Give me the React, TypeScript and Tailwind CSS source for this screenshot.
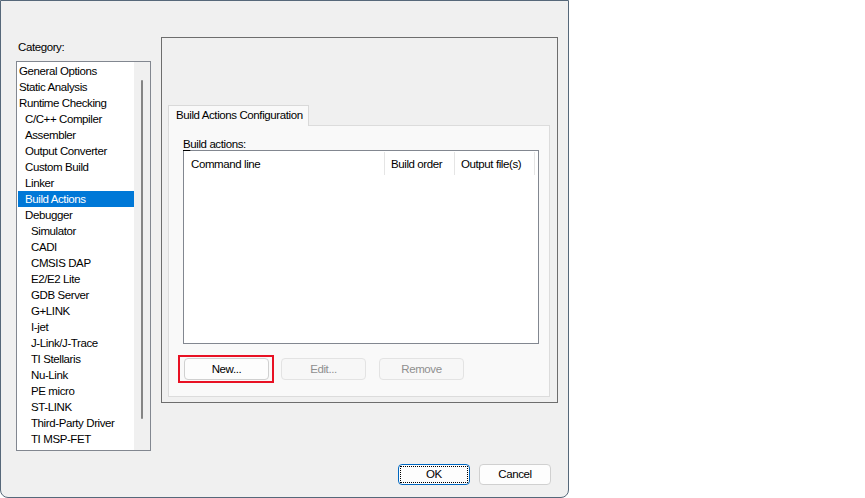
import React from 'react';

type Item = { label: string; level: number };

const items: Item[] = [
  { label: 'General Options', level: 0 },
  { label: 'Static Analysis', level: 0 },
  { label: 'Runtime Checking', level: 0 },
  { label: 'C/C++ Compiler', level: 1 },
  { label: 'Assembler', level: 1 },
  { label: 'Output Converter', level: 1 },
  { label: 'Custom Build', level: 1 },
  { label: 'Linker', level: 1 },
  { label: 'Build Actions', level: 1 },
  { label: 'Debugger', level: 1 },
  { label: 'Simulator', level: 2 },
  { label: 'CADI', level: 2 },
  { label: 'CMSIS DAP', level: 2 },
  { label: 'E2/E2 Lite', level: 2 },
  { label: 'GDB Server', level: 2 },
  { label: 'G+LINK', level: 2 },
  { label: 'I-jet', level: 2 },
  { label: 'J-Link/J-Trace', level: 2 },
  { label: 'TI Stellaris', level: 2 },
  { label: 'Nu-Link', level: 2 },
  { label: 'PE micro', level: 2 },
  { label: 'ST-LINK', level: 2 },
  { label: 'Third-Party Driver', level: 2 },
  { label: 'TI MSP-FET', level: 2 },
];

const indent = ['pl-[1px]', 'pl-[7px]', 'pl-[13px]'];

const App: React.FC = () => {
  const selected = 'Build Actions';

  return (
    <div className="w-[865px] h-[498px] bg-white font-['Liberation_Sans',Arial,sans-serif] text-[11.5px] tracking-[-0.4px] text-black">
      <div className="w-[569px] h-[498px] bg-[#f0f0f0] border border-[#56687a] rounded-b-[8px] flex flex-col">
        <div className="flex pt-[36px]">
          {/* category column */}
          <div className="ml-[15px] w-[135px] flex flex-col">
            <div className="mt-[2px] leading-[16px] pl-[2px]">Category:</div>
            <div className="mt-[6px] h-[390px] border border-[#828790] bg-white flex">
              <div className="flex-1 pt-[1px]">
                {items.map((it) => (
                  <div
                    key={it.label}
                    className={`ml-[1px] h-[16px] leading-[16px] whitespace-nowrap ${indent[it.level]} ${
                      it.label === selected ? 'bg-[#0078d7] text-white' : ''
                    }`}
                  >
                    {it.label}
                  </div>
                ))}
              </div>
              <div className="w-[16px] bg-[#f0f0f0] flex justify-center pt-[18px] pb-[31px]">
                <div className="w-[2px] h-full bg-[#858585] rounded-full" />
              </div>
            </div>
          </div>

          {/* group box */}
          <div className="ml-[10px] w-[397px] h-[366px] border border-[#6d6d6d] flex flex-col pt-[67px] pl-[6px] pr-[7px] pb-[5px]">
            <div className="relative z-10 -mb-px w-[141px] h-[21px] border border-b-0 border-[#d9d9d9] bg-[#f9f9f9] pl-[7px] leading-[19px] whitespace-nowrap">
              Build Actions Configuration
            </div>
            <div className="flex-1 border border-[#dcdcdc] bg-[#f9f9f9] pt-[12px] pl-[14px]">
              <div className="h-[12px] leading-[13px] whitespace-nowrap">
                <span className="underline underline-offset-[2px]">B</span>uild actions:
              </div>
              <div className="w-[356px] h-[194px] border border-[#828790] bg-white">
                <div className="flex h-[25px] items-stretch whitespace-nowrap">
                  <div className="w-[201px] border-r border-[#e5e5e5] my-[1px] pl-[7px] pt-[2px] flex items-center">Command line</div>
                  <div className="w-[70px] border-r border-[#e5e5e5] my-[1px] pl-[6px] pt-[2px] flex items-center">Build order</div>
                  <div className="w-[80px] border-r border-[#e5e5e5] my-[1px] pl-[6px] pt-[2px] flex items-center">Output file(s)</div>
                </div>
              </div>
              <div className="flex mt-[14px] pl-[1px]">
                <div className="relative">
                  <button className="w-[85px] h-[22px] rounded-[4px] border border-[#d0d0d0] bg-[#fdfdfd] pt-[1px]">New...</button>
                  <div className="absolute -left-[6px] -right-[5px] -top-[3px] -bottom-[3px] border-2 border-[#e81123] pointer-events-none" />
                </div>
                <button className="ml-[12px] w-[85px] h-[22px] rounded-[4px] border border-[#e3e3e3] bg-[#f7f7f7] text-[#8f8f8f] pt-[1px]">Edit...</button>
                <button className="ml-[13px] w-[85px] h-[22px] rounded-[4px] border border-[#e3e3e3] bg-[#f7f7f7] text-[#8f8f8f] pt-[1px]">Remove</button>
              </div>
            </div>
          </div>
        </div>

        <div className="mt-auto flex justify-end gap-[9px] pr-[17px] pb-[12px]">
          <button className="w-[72px] h-[21px] rounded-[4px] border border-[#0067c0] bg-[#fdfdfd] p-[1px]">
            <div className="w-full h-full border border-dotted border-black flex items-center justify-center">OK</div>
          </button>
          <button className="w-[72px] h-[21px] rounded-[4px] border border-[#d0d0d0] bg-[#fdfdfd]">Cancel</button>
        </div>
      </div>
    </div>
  );
};

export default App;
